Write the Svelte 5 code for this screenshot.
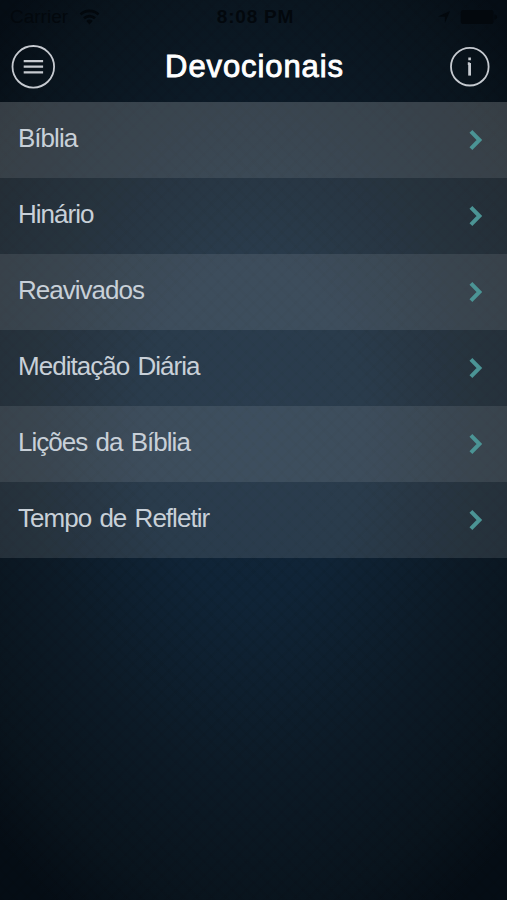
<script lang="ts">
  type Item = { id: string; label: string };

  const items: Item[] = [
    { id: 'biblia', label: 'Bíblia' },
    { id: 'hinario', label: 'Hinário' },
    { id: 'reavivados', label: 'Reavivados' },
    { id: 'meditacao', label: 'Meditação Diária' },
    { id: 'licoes', label: 'Lições da Bíblia' },
    { id: 'tempo', label: 'Tempo de Refletir' },
  ];
</script>

<div class="screen">
  <div class="status">
    <div class="carrier">
      <span>Carrier</span>
      <svg width="21" height="16" viewBox="0 0 21 16" fill="none" stroke="currentColor" stroke-width="2.6">
        <path d="M1.5 5.5a13 13 0 0 1 18 0M5 9.3a8 8 0 0 1 11 0" />
        <path d="M10.5 15.5L7.3 12a4.7 4.7 0 0 1 6.4 0z" fill="currentColor" stroke="none" />
      </svg>
    </div>
    <span class="time">8:08 PM</span>
    <div class="battery">
      <svg width="12" height="12" viewBox="0 0 13 13" fill="currentColor"><path d="M13 0L7.5 13V6.2L0 6z" /></svg>
      <svg width="38" height="14" viewBox="0 0 39 15" fill="currentColor">
        <rect x="0" y="0" width="35" height="15" rx="2.5" />
        <path d="M36 4.5q3 .5 3 3t-3 3z" />
      </svg>
    </div>
  </div>

  <header>
    <button class="icon" aria-label="Menu">
      <svg width="44" height="44" viewBox="0 0 44 44" fill="none" stroke="currentColor">
        <circle cx="22.3" cy="21.8" r="20.8" stroke-width="1.8" />
        <path d="M12.7 16.1h19.4M12.7 21.7h19.4M12.7 27.3h19.4" stroke-width="2.3" />
      </svg>
    </button>
    <h1>Devocionais</h1>
    <button class="icon" aria-label="Info">
      <svg width="40" height="40" viewBox="0 0 40 40" fill="none" stroke="currentColor">
        <circle cx="19.8" cy="19.7" r="18.8" stroke-width="1.8" />
        <path d="M19.6 16V28.6" stroke-width="2.8" />
        <path d="M17.8 16.6h2M19.6 10.6v2.6" stroke-width="2.6" />
      </svg>
    </button>
  </header>

  <nav>
    {#each items as item (item.id)}
      <button class="row">
        <span>{item.label}</span>
        <svg width="16" height="22" viewBox="0 0 16 22" fill="none" stroke="currentColor" stroke-width="4">
          <path d="M1.9 2.4L10.4 11l-8.5 8.6" />
        </svg>
      </button>
    {/each}
  </nav>
</div>

<style>
  :global(body) { margin: 0; background: #050d15; }

  .screen {
    height: 900px;
    box-sizing: border-box;
    overflow: hidden;
    font-family: "Liberation Sans", Arial, sans-serif;
    background:
      repeating-linear-gradient(45deg, rgba(0, 0, 0, 0.04) 0 3px, transparent 3px 10px),
      repeating-linear-gradient(-45deg, rgba(0, 0, 0, 0.04) 0 3px, transparent 3px 10px),
      radial-gradient(ellipse 370px 560px at 50% 48%, #11263a 0%, #102437 30%, #0c1a26 62%, #09141d 85%, #050d15 100%);
  }

  button { padding: 0; border: 0; background: none; font: inherit; color: inherit; }
  svg { display: block; }

  .status {
    display: grid;
    grid-template-columns: 1fr auto 1fr;
    align-items: center;
    height: 34px;
    padding: 0 9px 0 10px;
    box-sizing: border-box;
    color: #03080d;
    font-size: 19px;
  }
  .carrier { display: flex; align-items: center; gap: 11px; }
  .time { padding-left: 3px; font-weight: bold; letter-spacing: 0.8px; }
  .battery { display: flex; align-items: center; justify-content: flex-end; gap: 10px; }

  header {
    display: flex;
    align-items: center;
    justify-content: space-between;
    height: 68px;
    padding: 0 17px 2px 11px;
    box-sizing: border-box;
  }
  .icon { color: #c6cad0; }
  h1 {
    margin: 0;
    padding-left: 4px;
    color: #fff;
    font-size: 31px;
    font-weight: 400;
    line-height: 36px;
    letter-spacing: 0.9px;
    -webkit-text-stroke: 0.9px #fff;
  }

  .row {
    display: flex;
    align-items: center;
    justify-content: space-between;
    width: 100%;
    height: 76px;
    padding: 0 22px 0 18px;
    box-sizing: border-box;
    background: rgba(255, 255, 255, 0.11);
    color: #c8d0d8;
    font-size: 26px;
    letter-spacing: -0.98px;
    word-spacing: 2px;
    text-align: left;
  }
  .row:nth-child(odd) { background: rgba(255, 255, 255, 0.19); }
  .row span { padding-bottom: 3px; }
  .row svg { color: #4b9495; }
</style>
